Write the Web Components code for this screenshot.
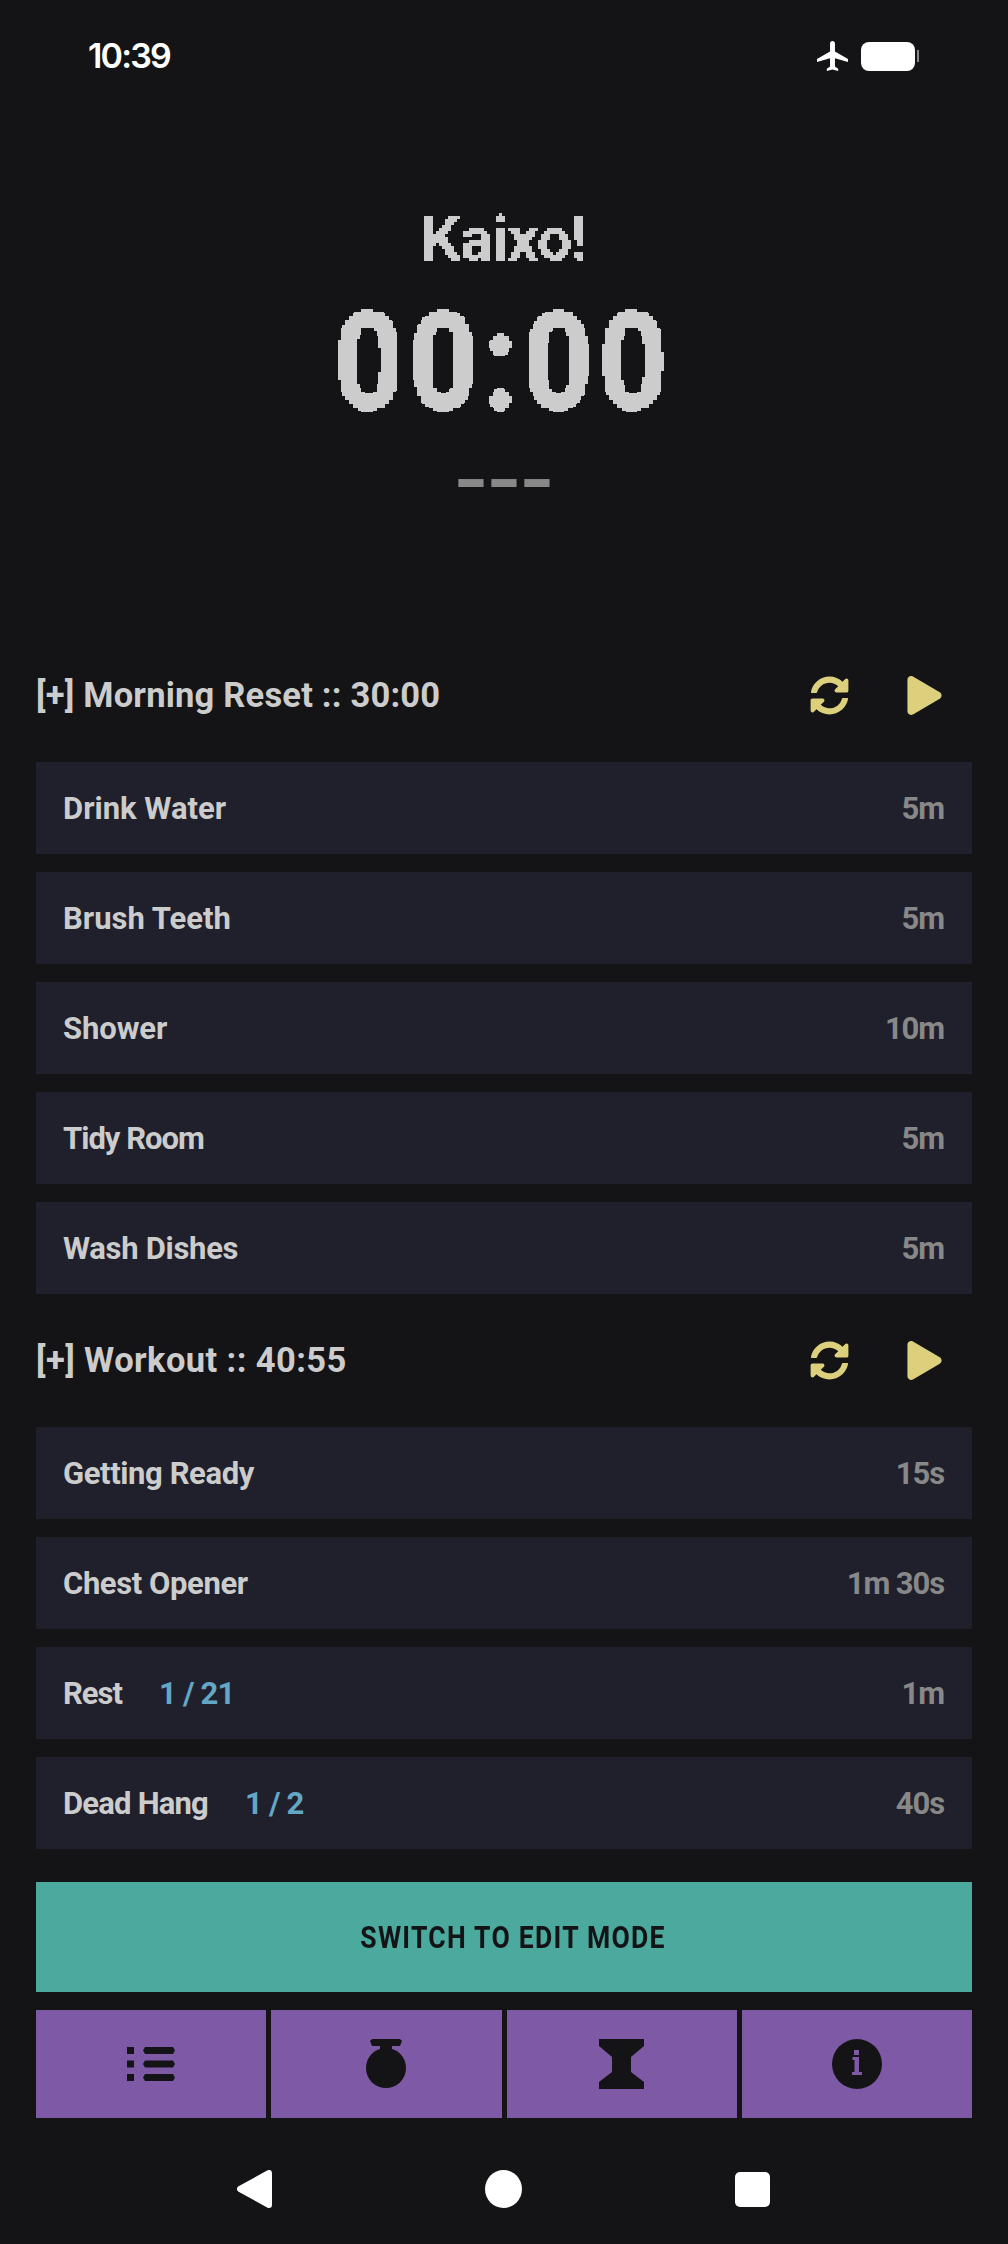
<!DOCTYPE html>
<html>
<head>
<meta charset="utf-8">
<title>Kaixo</title>
<style>
html, body { margin: 0; padding: 0; background: #141416; }
body { width: 1008px; height: 2244px; overflow: hidden; font-family: Roboto, "Liberation Sans", sans-serif; }
</style>
</head>
<body>
<timer-app>
    <status-bar slot="top"></status-bar>
    <timer-hero slot="top"></timer-hero>

    <routine-header time="30:00" name="Morning Reset"></routine-header>
    <routine-row time="5m">Drink Water</routine-row>
    <routine-row time="5m">Brush Teeth</routine-row>
    <routine-row time="10m" style="--track: -.1px">Shower</routine-row>
    <routine-row time="5m" style="--track: -1px">Tidy Room</routine-row>
    <routine-row time="5m" style="--track: -.3px">Wash Dishes</routine-row>

    <routine-header time="40:55" name="Workout" style="--head-track: .4px"></routine-header>
    <routine-row time="15s" style="--track: -.4px">Getting Ready</routine-row>
    <routine-row time="1m 30s" style="--track: -.4px">Chest Opener</routine-row>
    <routine-row time="1m" count="1 / 21" style="--track: -1px">Rest</routine-row>
    <routine-row time="40s" count="1 / 2" style="--track: -.8px">Dead Hang</routine-row>

    <mode-button slot="bottom">SWITCH TO EDIT MODE</mode-button>
    <tab-bar slot="bottom"></tab-bar>
    <system-nav slot="bottom"></system-nav>
</timer-app>

<script>
const FONT = 'Roboto, "Liberation Sans", sans-serif';

customElements.define('timer-app', class extends HTMLElement {
    constructor() {
        super();
        this.attachShadow({mode: 'open'}).innerHTML = `
            <style>
            :host { display: flex; flex-direction: column; height: 2244px; background: #141416; color: #ccc; }
            .list { display: flex; flex-direction: column; gap: 18px; padding: 0 36px; }
            </style>
            <slot name="top"></slot>
            <div class="list"><slot></slot></div>
            <slot name="bottom"></slot>`;
    }
});

customElements.define('status-bar', class extends HTMLElement {
    constructor() {
        super();
        this.attachShadow({mode: 'open'}).innerHTML = `
            <style>
            :host { display: flex; align-items: center; height: 112px; padding: 0 89px 0 88px; box-sizing: border-box; color: #fff; }
            .clock { flex: 1; font: 600 34px/1 "Inter", ${FONT}; letter-spacing: -1.8px; }
            .right { display: flex; align-items: center; height: 29px; }
            .plane { display: block; width: 31px; height: 30px; margin-right: 13px; }
            .batt { width: 54px; height: 29px; background: #fff; border-radius: 8px; }
            .nub { width: 2px; height: 12px; margin-left: 2px; background: #888; }
            </style>
            <div class="clock">10:39</div>
            <div class="right">
                <svg class="plane" viewBox="2 2 19 20" preserveAspectRatio="none"><path fill="#fff" d="M21 16v-2l-8-5V3.5c0-.83-.67-1.5-1.5-1.5S10 2.67 10 3.5V9l-8 5v2l8-2.5V19l-2 1.5V22l3.5-1 3.5 1v-1.5L13 19v-5.5l8 2.5z"/></svg>
                <div class="batt"></div>
                <div class="nub"></div>
            </div>`;
    }
});

customElements.define('timer-hero', class extends HTMLElement {
    constructor() {
        super();
        this.attachShadow({mode: 'open'}).innerHTML = `
            <style>
            :host { display: flex; flex-direction: column; align-items: center; height: 535px; box-sizing: border-box; padding-top: 92px; color: #ccc; }
            svg { position: absolute; width: 0; height: 0; }
            .hello { height: 70px; font: 700 62px/70px ${FONT}; letter-spacing: -1px; filter: url(#px3); }
            .time { height: 150px; margin-top: 14px; padding: 0 6px; font: 700 136px/150px ${FONT}; filter: url(#px4); }
            .time span { display: inline-block; letter-spacing: 7px; -webkit-text-stroke: 2px #ccc; transform: scaleX(.88); }
            .dash { height: 40px; margin-top: 19px; font: 700 66px/40px "Liberation Sans", sans-serif; color: #888; transform: scaleX(1.5); }
            </style>
            <svg aria-hidden="true">
                <filter id="px4" x="0" y="0" width="100%" height="100%" color-interpolation-filters="sRGB">
                    <feFlood x="1" y="1" width="2" height="2"/>
                    <feComposite width="4" height="4"/>
                    <feTile result="a"/>
                    <feComposite in="SourceGraphic" in2="a" operator="in"/>
                    <feMorphology operator="dilate" radius="1"/>
                    <feComponentTransfer><feFuncA type="discrete" tableValues="0 1"/></feComponentTransfer>
                </filter>
                <filter id="px3" x="0" y="0" width="100%" height="100%" color-interpolation-filters="sRGB">
                    <feFlood x="1" y="1" width="1" height="1"/>
                    <feComposite width="3" height="3"/>
                    <feTile result="a"/>
                    <feComposite in="SourceGraphic" in2="a" operator="in"/>
                    <feMorphology operator="dilate" radius="1"/>
                    <feComponentTransfer><feFuncA type="discrete" tableValues="0 1"/></feComponentTransfer>
                </filter>
            </svg>
            <div class="hello">Kaixo!</div>
            <div class="time"><span>00:00</span></div>
            <div class="dash">---</div>`;
    }
});

customElements.define('routine-header', class extends HTMLElement {
    constructor() {
        super();
        this.attachShadow({mode: 'open'}).innerHTML = `
            <style>
            :host { display: flex; align-items: center; height: 97px; color: #ccc; }
            .title { flex: 1; font: 700 34.500px/1 ${FONT}; letter-spacing: var(--head-track, .2px); white-space: pre; }
            .sync { display: block; width: 39px; height: 39px; margin-right: 58px; margin-left: -2px; }
            .play { display: block; width: 35px; height: 39px; margin-right: 30px; }
            </style>
            <div class="title">[+] ${this.getAttribute('name')} :: ${this.getAttribute('time')}</div>
            <svg class="sync" viewBox="0 0 512 512"><path fill="#dcd07c" d="M370.72 133.28C339.458 104.008 298.888 87.962 255.848 88c-77.458.068-144.328 53.178-162.791 126.85-1.344 5.363-6.122 9.15-11.651 9.15H24.103c-7.498 0-13.194-6.807-11.807-14.176C33.933 94.924 134.813 8 256 8c66.448 0 126.791 26.136 171.315 68.685L463.03 40.97C478.149 25.851 504 36.559 504 57.941V192c0 13.255-10.745 24-24 24H345.941c-21.382 0-32.09-25.851-16.971-40.971l41.75-41.749zM32 296h134.059c21.382 0 32.09 25.851 16.971 40.971l-41.75 41.75c31.262 29.273 71.835 45.319 114.876 45.28 77.418-.07 144.315-53.144 162.787-126.849 1.344-5.363 6.122-9.15 11.651-9.15h57.304c7.498 0 13.194 6.807 11.807 14.176C478.067 417.076 377.187 504 256 504c-66.448 0-126.791-26.136-171.315-68.685L48.97 471.03C33.851 486.149 8 475.441 8 454.059V320c0-13.255 10.745-24 24-24z"/></svg>
            <svg class="play" viewBox="0 0 448 512"><path fill="#dcd07c" d="M424.4 214.7L72.4 6.6C43.8-10.3 0 6.1 0 47.9V464c0 37.5 40.7 60.1 72.4 41.3l352-208c31.4-18.5 31.5-64.1 0-82.6z"/></svg>`;
    }
});

customElements.define('routine-row', class extends HTMLElement {
    constructor() {
        super();
        const count = this.getAttribute('count');
        this.attachShadow({mode: 'open'}).innerHTML = `
            <style>
            :host { display: flex; align-items: center; height: 92px; padding: 0 28px 0 27px; background: #1f202b; font: 700 31px/1 ${FONT}; color: #ccc; }
            .name { flex: 1; display: flex; gap: 37px; }
            .label { letter-spacing: var(--track, 0); }
            .count { color: #64a6c6; letter-spacing: -.8px; }
            .time { color: #888; letter-spacing: -1.1px; }
            </style>
            <div class="name"><span class="label"><slot></slot></span>${count ? `<span class="count">${count}</span>` : ''}</div>
            <div class="time">${this.getAttribute('time')}</div>`;
    }
});

customElements.define('mode-button', class extends HTMLElement {
    constructor() {
        super();
        this.attachShadow({mode: 'open'}).innerHTML = `
            <style>
            :host { display: flex; align-items: center; justify-content: center; height: 110px; margin: 33px 36px 0; padding-left: 19px; box-sizing: border-box; background: #4ca99e; color: #141416; font: 700 32px/1 ${FONT}; letter-spacing: 1.5px; }
            span { display: inline-block; transform: scaleX(.83); white-space: nowrap; }
            </style>
            <span><slot></slot></span>`;
    }
});

customElements.define('tab-button', class extends HTMLElement {
    constructor() {
        super();
        this.attachShadow({mode: 'open'}).innerHTML = `
            <style>
            :host { flex: 1; display: flex; align-items: center; justify-content: center; background: #7e59a5; }
            </style>
            <slot></slot>`;
    }
});

customElements.define('tab-bar', class extends HTMLElement {
    constructor() {
        super();
        this.attachShadow({mode: 'open'}).innerHTML = `
            <style>
            :host { display: flex; gap: 5px; height: 108px; margin: 18px 36px 0; }
            svg { display: block; }
            </style>
            <tab-button>
                <svg width="48" height="34" viewBox="0 0 48 34" fill="#141416"><path d="M0 0h7v7H0zM0 13.5h7v7H0zM0 27h7v7H0z"/><path d="M16 3.5 18 0h28l2 3.500L46 7H18zM16 17l2-3.500h28l2 3.500-2 3.500H18zM16 30.500l2-3.500h28l2 3.500-2 3.500H18z"/></svg>
            </tab-button>
            <tab-button>
                <svg width="40" height="49" viewBox="0 0 40 49" fill="#141416" style="margin-top:-2px"><path d="M4 2 6 0h28l2 2-2 5H26v3H14V7H6z"/><circle cx="20" cy="29" r="20"/></svg>
            </tab-button>
            <tab-button>
                <svg width="45" height="50" viewBox="0 0 45 50" fill="#141416"><path d="M0 0h45v7L32 18v15l13 10v7H0v-7l13-10V18L0 7z"/></svg>
            </tab-button>
            <tab-button>
                <svg width="50" height="50" viewBox="0 0 50 50"><circle cx="25" cy="25" r="25" fill="#141416"/><path fill="#7e59a5" d="M22 11h5v5h-5zM20.500 18H27v15h3v3H20v-3h2.500V21h-2z"/></svg>
            </tab-button>`;
    }
});

customElements.define('system-nav', class extends HTMLElement {
    constructor() {
        super();
        this.attachShadow({mode: 'open'}).innerHTML = `
            <style>
            :host { display: flex; align-items: center; height: 126px; padding: 16px 0 0 237px; box-sizing: border-box; }
            svg { display: block; }
            .home { margin-left: 213px; }
            .recent { margin-left: 213px; }
            </style>
            <svg width="35" height="38" viewBox="0 0 35 38"><path fill="#fff" stroke="#fff" stroke-width="6" stroke-linejoin="round" d="M3 19 32 3v32z"/></svg>
            <svg class="home" width="37" height="38" viewBox="0 0 37 38"><ellipse cx="18.500" cy="19" rx="18.500" ry="19" fill="#fff"/></svg>
            <svg class="recent" width="35" height="35" viewBox="0 0 35 35"><rect width="35" height="35" rx="5" fill="#fff"/></svg>`;
    }
});
</script>
</body>
</html>
